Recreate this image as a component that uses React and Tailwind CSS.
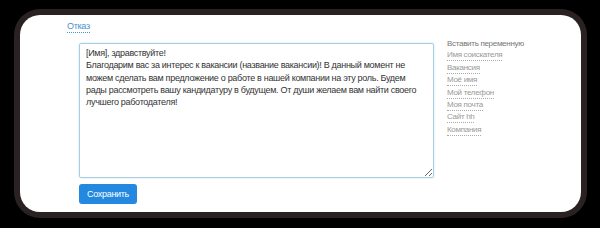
const variables = [
  "Имя соискателя",
  "Вакансия",
  "Моё имя",
  "Мой телефон",
  "Моя почта",
  "Сайт hh",
  "Компания",
];

const message =
  "[Имя], здравствуйте!\nБлагодарим вас за интерес к вакансии (название вакансии)! В данный момент не можем сделать вам предложение о работе в нашей компании на эту роль. Будем рады рассмотреть вашу кандидатуру в будущем. От души желаем вам найти своего лучшего работодателя!";

export default function App() {
  return (
    <div className="w-[600px] h-[228px] bg-black pt-[15px] pl-[20px] font-['Liberation_Sans',Arial,sans-serif]">
      <div className="w-[561px] h-[197px] bg-white rounded-[20px] shadow-[0_0_0_6px_#2a2222] pt-[5px] pl-[47px] text-[10px] leading-[12px]">
        <div className="flex">
          <a className="block text-[9px] leading-[12px] tracking-[-0.3px] text-[#4a90c8] border-b border-dotted border-[#4a90c8] cursor-pointer">
            Отказ
          </a>
        </div>
        <div className="flex pl-[12px] mt-[10px]">
          <div className="flex flex-col items-start">
            <textarea
              defaultValue={message}
              className="block w-[355px] h-[135px] resize border border-[#a6cfe2] rounded-[2px] px-[6px] py-[3px] text-[9px] leading-[12.3px] tracking-[-0.3px] text-[#333] outline-none shadow-[0_0_2px_rgba(102,175,233,0.4)]"
            />
            <button className="mt-[6px] w-[58px] h-[20px] bg-[#2288e0] rounded-[3px] text-white text-[9px] tracking-[-0.3px]">
              Сохранить
            </button>
          </div>
          <div className="ml-[13px] flex flex-col items-start text-[8px] leading-[10px] tracking-[-0.3px]">
            <div className="text-[#777] -mt-[4px]">Вставить переменную</div>
            {variables.map((v) => (
              <span
                key={v}
                className="mt-[1.4px] text-[#999] border-b border-dotted border-[#aaa] cursor-pointer"
              >
                {v}
              </span>
            ))}
          </div>
        </div>
      </div>
    </div>
  );
}
